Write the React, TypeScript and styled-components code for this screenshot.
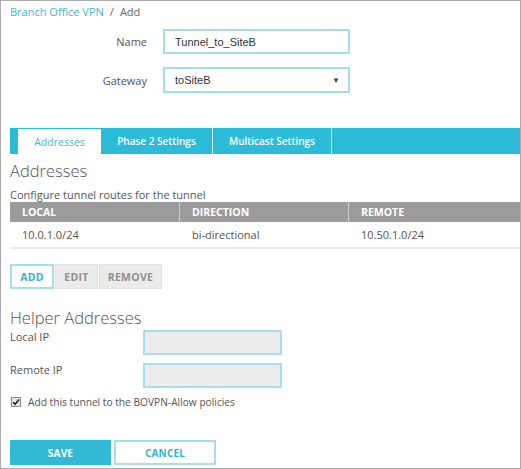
import React from "react";
import styled, { createGlobalStyle } from "styled-components";

const Global = createGlobalStyle`
  html, body { margin: 0; padding: 0; background: #fff; }
  body { font-family: "Open Sans", "Liberation Sans", sans-serif; color: #555; }
  * { box-sizing: border-box; }
`;

const TEAL = "#2dbcd8";
const TEAL_TEXT = "#35b3cf";
const INPUT_BORDER = "#a9dde9";

const Frame = styled.div`
  width: 521px;
  height: 469px;
  border: 1px solid #ababab;
  padding: 0 0 0 9px;
  display: flex;
  flex-direction: column;
  overflow: hidden;
`;

const Breadcrumb = styled.div`
  margin-top: 4px;
  font-size: 11px;
  line-height: 14px;
  display: flex;
  gap: 6px;
  color: #666;
`;

const Crumb = styled.span<{ $link?: boolean }>`
  color: ${(p) => (p.$link ? "#45b6d2" : "#666")};
`;

const FormGrid = styled.div`
  margin-top: 10px;
  display: grid;
  grid-template-columns: 137px 187px;
  column-gap: 16px;
  row-gap: 13px;
  align-items: center;
`;

const FieldLabel = styled.label`
  text-align: right;
  font-size: 11px;
  color: #555;
`;

const TextBox = styled.div<{ $h: number }>`
  height: ${(p) => p.$h}px;
  border: 2px solid ${INPUT_BORDER};
  padding: 0 10px;
  display: flex;
  align-items: center;
  justify-content: space-between;
  font-family: "Liberation Sans", Arial, sans-serif;
  font-size: 11px;
  color: #333;
`;

const Arrow = styled.span`
  font-size: 8px;
  color: #444;
  margin-right: -2px;
`;

const TabBar = styled.div`
  margin-top: 35px;
  height: 26px;
  background: ${TEAL};
  display: flex;
  padding-left: 8px;
  padding-top: 1px;
`;

const Tab = styled.div<{ $active?: boolean; $w: number }>`
  width: ${(p) => p.$w}px;
  display: flex;
  align-items: center;
  justify-content: center;
  font-size: ${(p) => (p.$active ? "10.5px" : "10px")};
  font-weight: ${(p) => (p.$active ? 400 : 600)};
  color: ${(p) => (p.$active ? "#4ab7d1" : "#fff")};
  background: ${(p) => (p.$active ? "#fff" : "transparent")};
  border-right: ${(p) => (p.$active ? "none" : "1px solid #d8f2f8")};
  margin-top: ${(p) => (p.$active ? "0" : "-1px")};
`;

const SectionTitle = styled.h2<{ $mt: number }>`
  margin: ${(p) => p.$mt}px 0 0 0;
  font-family: "Open Sans", "Lato", sans-serif;
  font-weight: 300;
  font-size: 16.5px;
  line-height: 22px;
  color: #555;
  letter-spacing: 0;
`;

const Hint = styled.div`
  margin-top: 6px;
  font-size: 11px;
  line-height: 14px;
  color: #555;
`;

const Table = styled.div`
  display: grid;
  grid-template-columns: 170px 169px 1fr;
`;

const HeadCell = styled.div<{ $last?: boolean }>`
  height: 20px;
  background: #9b9b9b;
  color: #fff;
  font-weight: 700;
  font-size: 10.5px;
  display: flex;
  align-items: center;
  padding-left: 12px;
  border-right: ${(p) => (p.$last ? "none" : "1px solid #d0d0d0")};
`;

const BodyCell = styled.div`
  height: 27px;
  border-bottom: 2px solid #ebebeb;
  font-size: 11px;
  color: #555;
  display: flex;
  align-items: center;
  padding-left: 12px;
`;

const ButtonGroup = styled.div`
  margin-top: 15px;
  display: flex;
  gap: 1px;
`;

const SmallButton = styled.button<{ $primary?: boolean; $w: number }>`
  width: ${(p) => p.$w}px;
  height: 25px;
  font-family: "Open Sans", sans-serif;
  font-weight: 700;
  font-size: 10.5px;
  letter-spacing: 0.3px;
  border: ${(p) => (p.$primary ? `2px solid ${INPUT_BORDER}` : "1px solid #e2e2e2")};
  background: ${(p) => (p.$primary ? "#fff" : "#ebebeb")};
  color: ${(p) => (p.$primary ? TEAL_TEXT : "#8f8f8f")};
  padding: 0;
`;

const HelperGrid = styled.div`
  margin-top: 1px;
  display: grid;
  grid-template-columns: 133px 139px;
  row-gap: 8px;
`;

const PlainLabel = styled.div`
  font-size: 11px;
  line-height: 14px;
  color: #555;
`;

const GrayInput = styled.div`
  height: 25px;
  background: #ececec;
  border: 2px solid ${INPUT_BORDER};
`;

const CheckRow = styled.label`
  margin-top: 7px;
  display: flex;
  align-items: center;
  gap: 7px;
  font-size: 10.2px;
  line-height: 14px;
  color: #555;
  padding-left: 1px;
`;

const CheckBox = styled.span`
  width: 10px;
  height: 10px;
  border: 1px solid #8a8a8a;
  background: #e4e4e4;
  display: inline-flex;
  align-items: center;
  justify-content: center;
`;

const Footer = styled.div`
  margin-top: 31px;
  display: flex;
  gap: 3px;
`;

const BigButton = styled.button<{ $primary?: boolean; $w: number }>`
  width: ${(p) => p.$w}px;
  height: 25px;
  font-family: "Open Sans", sans-serif;
  font-weight: 700;
  font-size: 10px;
  letter-spacing: 0.2px;
  border: ${(p) => (p.$primary ? `1px solid ${TEAL}` : `2px solid ${INPUT_BORDER}`)};
  background: ${(p) => (p.$primary ? "#33b9d3" : "#fff")};
  color: ${(p) => (p.$primary ? "#fff" : TEAL_TEXT)};
  padding: 0;
`;

export default function App() {
  return (
    <>
      <Global />
      <Frame>
        <Breadcrumb>
          <Crumb $link>Branch Office VPN</Crumb>
          <Crumb>/</Crumb>
          <Crumb>Add</Crumb>
        </Breadcrumb>

        <FormGrid>
          <FieldLabel>Name</FieldLabel>
          <TextBox $h={25}>Tunnel_to_SiteB</TextBox>
          <FieldLabel>Gateway</FieldLabel>
          <TextBox $h={26}>
            <span>toSiteB</span>
            <Arrow>▼</Arrow>
          </TextBox>
        </FormGrid>

        <TabBar>
          <Tab $active $w={83}>Addresses</Tab>
          <Tab $w={112}>Phase 2 Settings</Tab>
          <Tab $w={119}>Multicast Settings</Tab>
        </TabBar>

        <SectionTitle $mt={6}>Addresses</SectionTitle>
        <Hint>Configure tunnel routes for the tunnel</Hint>

        <Table>
          <HeadCell>LOCAL</HeadCell>
          <HeadCell>DIRECTION</HeadCell>
          <HeadCell $last>REMOTE</HeadCell>
          <BodyCell>10.0.1.0/24</BodyCell>
          <BodyCell>bi-directional</BodyCell>
          <BodyCell>10.50.1.0/24</BodyCell>
        </Table>

        <ButtonGroup>
          <SmallButton $primary $w={44}>ADD</SmallButton>
          <SmallButton $w={43}>EDIT</SmallButton>
          <SmallButton $w={63}>REMOVE</SmallButton>
        </ButtonGroup>

        <SectionTitle $mt={18}>Helper Addresses</SectionTitle>

        <HelperGrid>
          <PlainLabel>Local IP</PlainLabel>
          <GrayInput />
          <PlainLabel>Remote IP</PlainLabel>
          <GrayInput />
        </HelperGrid>

        <CheckRow>
          <CheckBox>
            <svg width="8" height="8" viewBox="0 0 8 8">
              <path d="M1 4.2 L3 6.2 L7 1.5" stroke="#222" strokeWidth="1.6" fill="none" />
            </svg>
          </CheckBox>
          Add this tunnel to the BOVPN-Allow policies
        </CheckRow>

        <Footer>
          <BigButton $primary $w={101}>SAVE</BigButton>
          <BigButton $w={102}>CANCEL</BigButton>
        </Footer>
      </Frame>
    </>
  );
}
